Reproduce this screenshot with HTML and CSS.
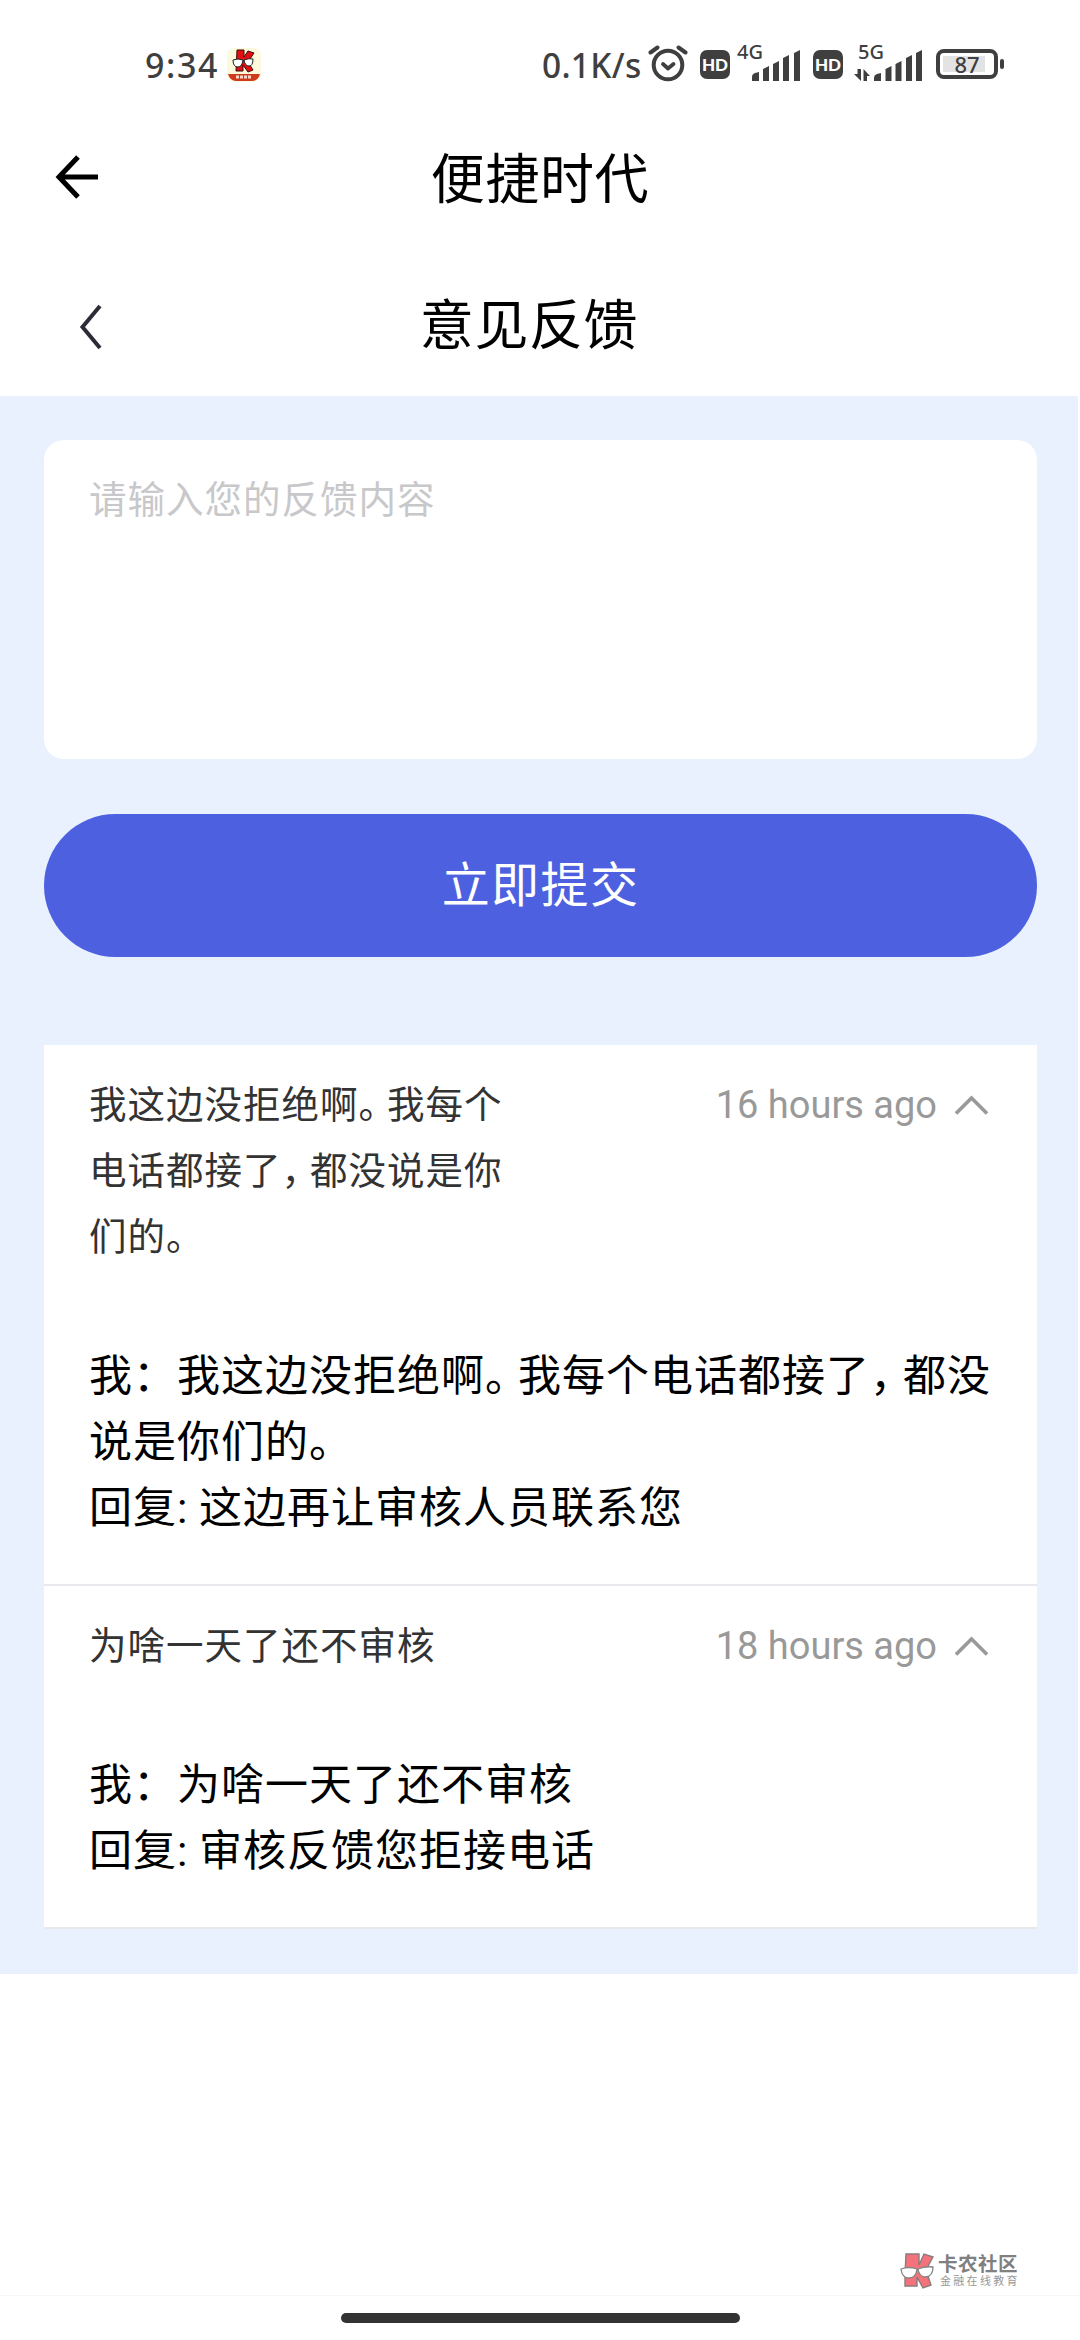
FILE: index.html
```html
<!DOCTYPE html>
<html lang="zh-CN">
<head>
<meta charset="utf-8">
<title>意见反馈</title>
<link rel="stylesheet" href="styles.css">
</head>
<body>
<div class="screen">
  <header class="status">
    <span class="clock">9:34</span>
    <svg class="app-icon" viewBox="0 0 34 34" width="34" height="34">
      <rect width="34" height="34" rx="8" fill="#fdf9dc"/>
      <path d="M10 2h7v7l4-6 6 2-6 9 5 8-5 2-5-7v6h-7z" fill="#e30d12" stroke="#3a0a08" stroke-width="1"/>
      <path d="M6 12q5-2 10 0-1 7-5 7-5 0-5-7zM17 12q5-2 9-1 0 7-4 7-4 0-5-6z" fill="#fff" stroke="#222" stroke-width="1"/>
      <path d="M1 26h32q-2 7-8 7H9q-6 0-8-7z" fill="#cf3a1c"/>
      <path d="M9 29h16" stroke="#f6d9c8" stroke-width="3" stroke-dasharray="3 1"/>
    </svg>
    <span class="speed">0.1K/s</span>
    <svg class="alarm" viewBox="0 0 40 38" width="40" height="38">
      <g fill="none" stroke="#3f3f3f" stroke-width="4" stroke-linecap="round">
        <circle cx="20" cy="21" r="14.3"/>
        <path d="M2.500 8.500 9.500 3.500M30.500 3.500 37.500 8.500"/>
        <path d="M15 20l5 4.500 5.500-4.500" stroke-width="3.800" stroke-linejoin="round"/>
      </g>
    </svg>
    <span class="hd">HD</span>
    <span class="net net-a">
      <b>4G</b>
      <svg viewBox="0 0 64 34" width="64" height="34"><g fill="#3f3f3f"><path d="M15 30q0-3 3-4l4-1v9h-7zM26 22l6-3v15h-6zM36 17l6-3v20h-6zM46 11l6-3v26h-6zM57 6l6-3v31h-6z"/></g></svg>
    </span>
    <span class="hd hd-b">HD</span>
    <span class="net net-b">
      <b>5G</b>
      <svg viewBox="0 0 68 34" width="68" height="34"><g fill="#3f3f3f"><path d="M20 31q0-3 3-4l4-1v8h-7zM31.500 22l6-3v15h-6zM41.500 17l6-3v20h-6zM52 11l6-3v26h-6zM62 6l6-3v31h-6z"/><path d="M7 22v12L0 27h3.500v-5zM9.500 34V22l6.500 7h-3v5z"/></g></svg>
    </span>
    <span class="battery"><span>87</span></span>
  </header>

  <div class="bar app-bar">
    <svg viewBox="0 0 46 46" width="46" height="46"><path d="M24 3 5 23l19 20M5 23h39" fill="none" stroke="#000" stroke-width="5"/></svg>
    <h1>便捷时代</h1>
  </div>
  <div class="bar page-bar">
    <svg viewBox="0 0 24 46" width="24" height="46"><path d="M22 2 4.500 23 22 44" fill="none" stroke="#2c2b38" stroke-width="4"/></svg>
    <h2>意见反馈</h2>
  </div>

  <main class="content">
    <div class="editor"><span>请输入您的反馈内容</span></div>
    <div class="submit">立即提交</div>
    <section class="list">
      <article class="item">
        <div class="head">
          <p class="subject">我这边没拒绝啊<i>。</i>我每个<br>电话都接了<i>，</i>都没说是你<br>们的。</p>
          <span class="time">16 hours ago</span>
          <svg viewBox="0 0 36 22" width="36" height="22"><path d="M2 19.500 17.500 4 33 19.500" fill="none" stroke="#999" stroke-width="3.600"/></svg>
        </div>
        <p class="reply">我：我这边没拒绝啊<i>。</i>我每个电话都接了<i>，</i>都没<br>说是你们的。<br>回复<em>:</em>这边再让审核人员联系您</p>
      </article>
      <article class="item">
        <div class="head">
          <p class="subject">为啥一天了还不审核</p>
          <span class="time">18 hours ago</span>
          <svg viewBox="0 0 36 22" width="36" height="22"><path d="M2 19.500 17.500 4 33 19.500" fill="none" stroke="#999" stroke-width="3.600"/></svg>
        </div>
        <p class="reply">我：为啥一天了还不审核<br>回复<em>:</em>审核反馈您拒接电话</p>
      </article>
    </section>
  </main>

  <footer class="footer">
    <div class="brand">
      <svg viewBox="0 0 34 36" width="34" height="36">
        <path d="M6 1h13v11l5-11 9 3-7 13 5 15-8 3-6-11v9H5V22z" fill="#f4727c" stroke="#8b7b7b" stroke-width="1.400"/>
        <path d="M1 16q8-3 16 0-1 9-8 9-7 0-8-9zM18 16q7-3 15-2 0 9-7 10-7 0-8-8z" fill="#fff" stroke="#858585" stroke-width="1.300"/>
      </svg>
      <div class="brand-text"><strong>卡农社区</strong><small>金融在线教育</small></div>
    </div>
    <div class="gesture"><div class="home"></div></div>
  </footer>
</div>
</body>
</html>
```

FILE: styles.css
```css
* { box-sizing: border-box; }
body { margin: 0; background: #fff; font-family: Roboto, "Noto Sans CJK SC", sans-serif; color: #000; }
h1, h2, p { margin: 0; font-weight: 400; }
i, em { font-style: normal; }
svg { display: block; flex: none; }
.screen { width: 1080px; height: 2340px; display: flex; flex-direction: column; overflow: hidden; }

.status { height: 130px; flex: none; display: flex; align-items: center; padding: 0 0 0 145px; color: #3f3f3f; white-space: nowrap; }
.clock, .speed { font-family: "Noto Sans", sans-serif; font-weight: 500; font-size: 34px; line-height: 40px; margin-top: -1px; }
.clock { width: 82px; letter-spacing: 1.600px; }
.speed { margin-left: 281px; width: 106px; font-size: 33.500px; letter-spacing: .3px; }
.alarm { margin-top: -4px; }
.hd { width: 30px; height: 29px; margin: -2px 0 0 12px; border-radius: 7px; background: #3f3f3f; color: #fff; font: 900 17px/29px Lato, sans-serif; text-align: center; }
.net { position: relative; height: 34px; margin-top: -3px; }
.net b { position: absolute; left: 0; top: -7px; font: 500 20px/24px "Noto Sans", sans-serif; }
.net-a { margin-left: 7px; }
.net-b { margin-left: 11px; }
.net-b b { left: 4px; }
.battery { position: relative; width: 62px; height: 30px; margin: -2px 0 0 14px; border: 4px solid #3f3f3f; border-radius: 8px; padding: 3px; }
.battery::after { content: ""; position: absolute; left: 60px; top: 6px; width: 4px; height: 10px; border-radius: 2px; background: #3f3f3f; }
.battery span { display: block; width: 42px; height: 16px; background: #e3e3e3; padding-left: 6px; font: 500 22px/17px "Noto Sans", sans-serif; text-align: center; }

.bar { display: grid; grid-template-columns: 1fr auto 1fr; align-items: center; flex: none; }
.bar h1, .bar h2 { font-size: 54px; line-height: 80px; letter-spacing: .6px; }
.app-bar { height: 100px; padding: 0 0 7px 54px; }
.app-bar h1 { padding: 9px 54px 0 0; }
.page-bar { height: 166px; padding: 28px 0 0 78px; }
.page-bar h2 { padding: 0 100px 0 0; }

.content { width: 1078px; height: 1578px; flex: none; padding: 44px 41px 0 44px; background: #e9f0fe; display: flex; flex-direction: column; }
.editor { height: 319px; flex: none; padding: 30px 45px; background: #fff; border-radius: 20px; color: #c8c8ca; font-size: 37.500px; line-height: 60px; letter-spacing: 1px; }
.submit { height: 143px; flex: none; margin-top: 55px; border-radius: 72px; background: #4d61e0; color: #fff; font-size: 48px; line-height: 143px; letter-spacing: 1.400px; text-align: center; }
.list { margin-top: 88px; background: #fff; }
.item { padding: 27px 45px 43px; border-bottom: 2px solid #e8e9ed; }
.head { display: flex; align-items: flex-start; }
.subject { flex: 1; color: #333; font-size: 37.500px; line-height: 66px; letter-spacing: 1px; white-space: nowrap; }
.time { color: #999; font-size: 38px; line-height: 66px; }
.head svg { margin: 22px 2px 0 17px; }
.reply { margin-top: 73px; font-size: 43px; line-height: 66px; letter-spacing: 1px; white-space: nowrap; }
.subject i, .reply i { display: inline-block; font-feature-settings: "halt"; }
.subject i { width: 28.500px; }
.reply i { width: 33px; }
.reply em { display: inline-block; width: 22px; }

.footer { flex: 1; display: flex; flex-direction: column; justify-content: flex-end; }
.brand { align-self: flex-end; display: flex; align-items: center; gap: 4px; margin: 0 61px 6px 0; }
.brand-text { display: flex; flex-direction: column; width: 81px; white-space: nowrap; }
.brand strong { font-size: 19.500px; line-height: 21px; font-weight: 700; color: #808080; letter-spacing: .5px; }
.brand small { font-size: 11px; line-height: 13px; color: #999; letter-spacing: 2.300px; padding-left: 2px; }
.gesture { height: 45px; padding-top: 17px; border-top: 1px solid #f8f8f8; }
.home { width: 399px; height: 10px; margin: 0 auto; border-radius: 5px; background: #333; }
```
